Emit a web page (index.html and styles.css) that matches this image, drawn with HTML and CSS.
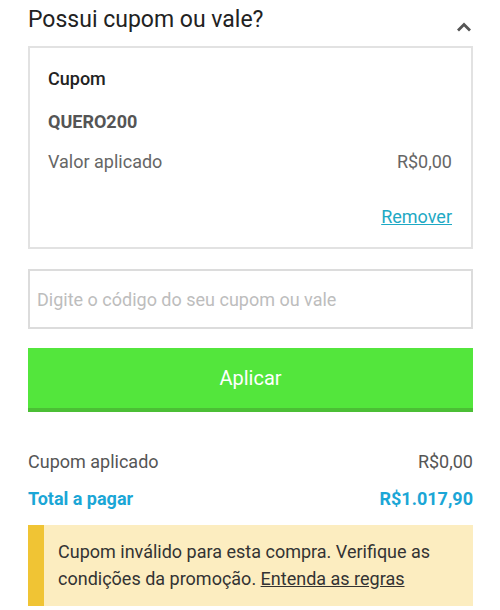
FILE: index.html
```html
<!DOCTYPE html>
<html lang="pt-BR">
<head>
    <meta charset="UTF-8">
    <meta name="viewport" content="width=device-width, initial-scale=1.0">
    <title>Cupom</title>
    <link rel="stylesheet" href="styles.css">
</head>
<body>
    <div class="page">
        <div class="header">
            <h1>Possui cupom ou vale?</h1>
            <svg class="chevron" width="16" height="10" viewBox="0 0 16 10">
                <path d="M2 8.5 L8 2.5 L14 8.5" fill="none" stroke="#555" stroke-width="2.8"/>
            </svg>
        </div>

        <div class="card">
            <div class="card-title">Cupom</div>
            <div class="code">QUERO200</div>
            <div class="row muted">
                <span>Valor aplicado</span>
                <span>R$0,00</span>
            </div>
            <div class="remove"><a href="#">Remover</a></div>
        </div>

        <input class="coupon-input" type="text" placeholder="Digite o código do seu cupom ou vale">

        <button class="apply">Aplicar</button>

        <div class="summary">
            <div class="row muted">
                <span>Cupom aplicado</span>
                <span>R$0,00</span>
            </div>
            <div class="row total">
                <span>Total a pagar</span>
                <span>R$1.017,90</span>
            </div>
        </div>

        <div class="alert">
            Cupom inválido para esta compra. Verifique as condições da promoção. <a href="#">Entenda as regras</a>
        </div>
    </div>
</body>
</html>
```

FILE: styles.css
```css
body {
    font-family: Roboto, "Noto Sans", Arial, sans-serif;
    background-color: #fff;
    margin: 0;
    color: #222;
}
.page {
    padding: 0 27px 0 28px;
}
.header {
    display: flex;
    justify-content: space-between;
    align-items: flex-start;
    padding-top: 6px;
}
.header h1 {
    font-size: 23px;
    font-weight: 400;
    line-height: 28px;
    margin: 0;
    color: #222;
}
.chevron {
    margin-top: 16px;
    margin-right: 1px;
}
.card {
    margin-top: 12px;
    border: 2px solid #e2e2e2;
    padding: 19px 19px 18px 18px;
    font-size: 18px;
    line-height: 24px;
}
.card-title {
    font-weight: 500;
    color: #222;
}
.code {
    margin-top: 19px;
    font-weight: 700;
    color: #555;
}
.card .row {
    margin-top: 16px;
}
.row {
    display: flex;
    justify-content: space-between;
}
.muted {
    color: #666;
}
.remove {
    margin-top: 31px;
    text-align: right;
}
.remove a {
    color: #1ea9c4;
}
.coupon-input {
    display: block;
    box-sizing: border-box;
    width: 100%;
    height: 60px;
    margin-top: 20px;
    border: 2px solid #dcdcdc;
    border-radius: 0;
    padding: 0 7px;
    font-family: inherit;
    font-size: 18px;
    color: #333;
    outline: none;
}
.coupon-input::placeholder {
    color: #bdbdbd;
}
.apply {
    display: block;
    width: 100%;
    height: 64px;
    margin-top: 19px;
    border: none;
    border-bottom: 4px solid #4bbf35;
    background-color: #53e63c;
    color: #fff;
    font-family: inherit;
    font-size: 20px;
    padding: 0;
    cursor: pointer;
}
.summary {
    margin-top: 38px;
    font-size: 18px;
    line-height: 24px;
}
.summary .muted {
    color: #555;
}
.total {
    margin-top: 13px;
    font-weight: 700;
    color: #1ba6d6;
}
.alert {
    margin-top: 14px;
    background-color: #fcedc0;
    border-left: 16px solid #f0c434;
    padding: 13px 10px 14px 14px;
    font-size: 18px;
    line-height: 27px;
    color: #333;
}
.alert a {
    color: #333;
}
```
